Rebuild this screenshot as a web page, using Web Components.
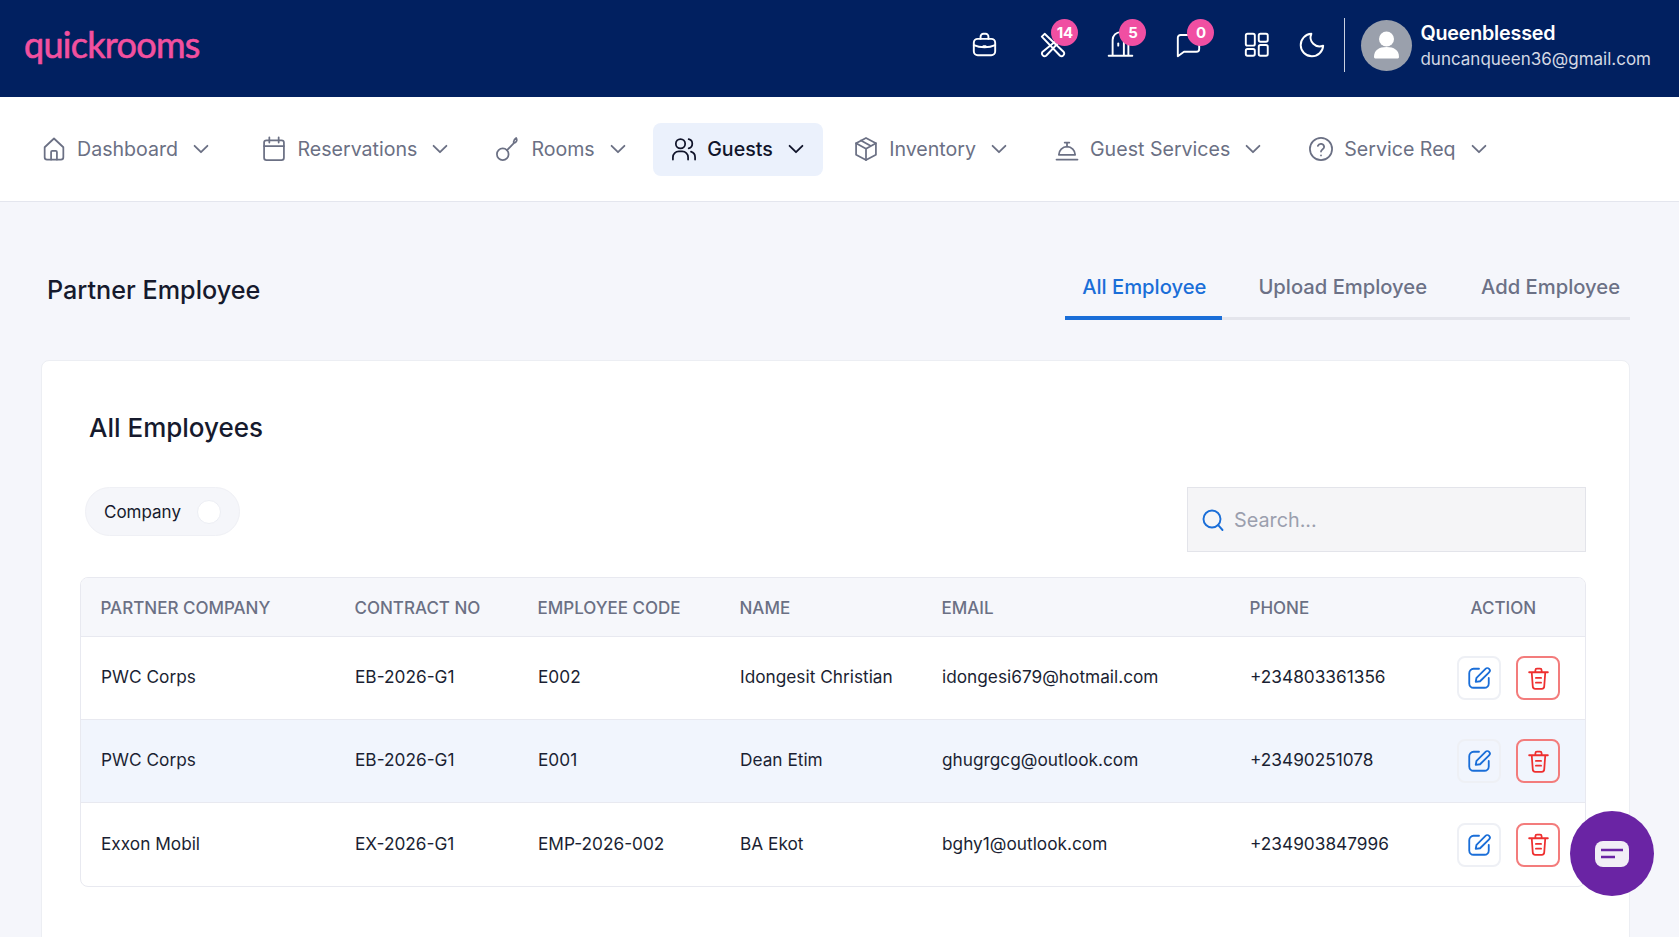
<!DOCTYPE html>
<html lang="en">
<head>
<meta charset="utf-8">
<title>Partner Employee</title>
<style>
  html, body { margin: 0; height: 100%; overflow: hidden; }
  body { background: #f5f6fb; font-family: Inter, "Liberation Sans", sans-serif; color: #161a2d; }
</style>
</head>
<body>
<app-header></app-header>
<main-nav></main-nav>
<employee-page></employee-page>
<chat-fab></chat-fab>

<script>
// Stroke icons, all on a 24 unit box
const ICONS = {
  home: '<path d="M4 10.5 12 3l8 7.5V19a2 2 0 0 1-2 2H6a2 2 0 0 1-2-2z"/><path d="M9.5 21v-6.5a1 1 0 0 1 1-1h3a1 1 0 0 1 1 1V21"/>',
  calendar: '<rect x="3.5" y="4.5" width="17" height="17" rx="2"/><path d="M3.5 9.5h17M8 2v4.5M16 2v4.5"/>',
  key: '<circle cx="7.5" cy="16.5" r="5"/><path d="M11.2 13 17 7M17 7c-.5-2 .3-3.500 2-4.500 1 1.700.6 3.700-2 4.500z"/>',
  users: '<circle cx="9" cy="7.5" r="4"/><path d="M2.5 21v-2a5 5 0 0 1 5-5h3a5 5 0 0 1 5 5v2M16 3.6a4 4 0 0 1 0 7.8M21.5 21v-2a5 5 0 0 0-3.500-4.700"/>',
  box: '<path d="M12 2.500 20.500 7v10L12 21.500 3.500 17V7z"/><path d="M3.500 7 12 11.800 20.500 7M12 11.800v9.700M7.700 4.700l8.500 4.700"/>',
  bell: '<path d="M5 17a7 7 0 0 1 14 0z"/><path d="M3 21h18M12 10V7M10 6.500h4"/>',
  help: '<circle cx="12" cy="12" r="9.500"/><path d="M9.300 9.300a2.800 2.800 0 0 1 5.400.9c0 1.800-2.700 2.400-2.700 4"/><path d="M12 17.500h.01"/>',
  chevron: '<path d="m5 8.500 7 7 7-7"/>',
  briefcase: '<rect x="2.500" y="7" width="19" height="14.500" rx="3.500"/><path d="M8.500 7V5a2.500 2.500 0 0 1 2.500-2.500h2A2.500 2.500 0 0 1 15.500 5v2M2.500 12.500c5.500 2.500 13.500 2.500 19 0M11 13.500h2"/>',
  tools: '<path d="M2.500 5 5 2.500l17 16.200a2.400 2.400 0 0 1-3.300 3.300z"/><path d="M21 4 3 18.700a2.400 2.400 0 0 0 3.300 3.300L20.500 7"/>',
  door: '<path d="M1.500 22h21M5 22V8a7 7 0 0 1 14 0v14M15 9v13"/><path d="M10 11v2"/>',
  chat: '<path d="M2.500 6a2.500 2.500 0 0 1 2.500-2.500h14A2.500 2.500 0 0 1 21.500 6v10a2.500 2.500 0 0 1-2.500 2.500H8L2.500 22.500z"/>',
  grid: '<rect x="2.500" y="2.500" width="8" height="10.500" rx="1.500"/><rect x="14" y="2.500" width="8" height="7" rx="1.500"/><rect x="2.500" y="16" width="8" height="6" rx="1.500"/><rect x="14" y="12.500" width="8" height="9.500" rx="1.500"/>',
  moon: '<path d="M11 2.500a8 8 0 0 0 10.500 10.500A10 10 0 1 1 11 2.500z"/>',
  search: '<circle cx="11" cy="11" r="8.500"/><path d="m17.200 17.200 4.300 4.800"/>',
  edit: '<path d="M12 3.500H7A4 4 0 0 0 3 7.500V17a4 4 0 0 0 4 4h10a4 4 0 0 0 4-4v-5"/><path d="M9 15.500l.7-3.700L18 3.500a2.300 2.300 0 0 1 3.300 3.300L13 15z"/>',
  trash: '<path d="M3 6h18M9 6V4a1.500 1.500 0 0 1 1.500-1.500h3A1.500 1.500 0 0 1 15 4v2M5.500 6l1 13.500A2.500 2.500 0 0 0 9 22h6a2.500 2.500 0 0 0 2.500-2.500l1-13.500M9.500 11.500h5M9.500 16h5"/>'
};

class AppIcon extends HTMLElement {
  connectedCallback() {
    const size = this.getAttribute("size") || 24;
    const stroke = this.getAttribute("stroke") || 1.7;
    this.attachShadow({ mode: "open" }).innerHTML = `
      <style>:host { display: inline-flex; flex: none; line-height: 0; }</style>
      <svg width="${size}" height="${size}" viewBox="0 0 24 24" fill="none" stroke="currentColor"
        stroke-width="${stroke}" stroke-linecap="round" stroke-linejoin="round">${ICONS[this.getAttribute("name")]}</svg>`;
  }
}

// Header icon with optional pink counter
class HeaderIcon extends HTMLElement {
  connectedCallback() {
    const count = this.getAttribute("count");
    this.attachShadow({ mode: "open" }).innerHTML = `
      <style>
        :host { display: block; position: relative; width: 27px; height: 27px; color: #fff; }
        .badge {
          position: absolute; top: -12px; left: 12px; width: 27px; height: 27px; border-radius: 50%;
          background: #f04fa2; color: #fff; font-size: 15px; font-weight: 700;
          display: flex; align-items: center; justify-content: center;
        }
      </style>
      <app-icon name="${this.getAttribute("name")}" size="27" stroke="1.7"></app-icon>
      ${count !== null ? `<span class="badge">${count}</span>` : ""}`;
  }
}

class AppHeader extends HTMLElement {
  connectedCallback() {
    this.attachShadow({ mode: "open" }).innerHTML = `
      <style>
        :host { display: flex; align-items: center; height: 97px; padding: 0 28px 0 24px; box-sizing: border-box; background: #012060; color: #fff; }
        .logo { font-family: Lato, sans-serif; font-size: 36px; font-weight: 400; letter-spacing: -0.7px; color: #f2509f; -webkit-text-stroke: 0.6px #f2509f; margin-top: -9px; }
        .icons { margin-left: auto; display: flex; align-items: center; gap: 41px; margin-top: -8px; }
        .icons header-icon:last-child { margin-left: -12px; }
        .divider { width: 1px; height: 54px; background: #c9d0e0; margin: -7px 16px 0 18px; }
        .avatar { width: 51px; height: 51px; border-radius: 50%; background: #9aa0ac; overflow: hidden; margin-top: -7px; }
        .user { margin-left: 8px; margin-top: -7px; }
        .name { font-size: 19.7px; font-weight: 600; line-height: 27px; letter-spacing: -0.2px; padding-top: 2px; }
        .email { font-size: 17px; line-height: 25px; color: #d3d8e4; }
      </style>
      <div class="logo">quickrooms</div>
      <div class="icons">
        <header-icon name="briefcase"></header-icon>
        <header-icon name="tools" count="14"></header-icon>
        <header-icon name="door" count="5"></header-icon>
        <header-icon name="chat" count="0"></header-icon>
        <header-icon name="grid"></header-icon>
        <header-icon name="moon"></header-icon>
      </div>
      <div class="divider"></div>
      <div class="avatar">
        <svg width="51" height="51" viewBox="0 0 51 51" fill="#fff"><circle cx="25.500" cy="19" r="7.500"/><path d="M13 37c0-7 5-10 12.500-10S38 30 38 37c0 1-1 1.500-2 1.500H15c-1 0-2-.5-2-1.500z"/></svg>
      </div>
      <div class="user">
        <div class="name">Queenblessed</div>
        <div class="email">duncanqueen36@gmail.com</div>
      </div>`;
  }
}

class NavItem extends HTMLElement {
  connectedCallback() {
    this.attachShadow({ mode: "open" }).innerHTML = `
      <style>
        :host { display: flex; align-items: center; height: 53px; padding: 0 16px 0 17px; border-radius: 8px; color: #6b7084; font-size: 19.6px; }
        :host([active]) { background: #ebf1fc; color: #10142a; font-weight: 500; }
        span { margin: 0 12px 0 9px; }
      </style>
      <app-icon name="${this.getAttribute("icon")}" size="28" stroke="1.5"></app-icon>
      <span><slot></slot></span>
      <app-icon name="chevron" size="22" stroke="2"></app-icon>`;
  }
}

class MainNav extends HTMLElement {
  connectedCallback() {
    this.attachShadow({ mode: "open" }).innerHTML = `
      <style>
        :host { display: flex; align-items: center; gap: 11px; height: 105px; padding: 0 23px; box-sizing: border-box; background: #fff; border-bottom: 1px solid #e4e6ee; }
        nav-item:nth-of-type(1) { margin-right: 4.4px; }
        nav-item:nth-of-type(2) { margin-right: -1px; }
        nav-item:nth-of-type(3) { margin-right: -2.5px; }
        nav-item:nth-of-type(4) { margin-right: 1.4px; }
        nav-item:nth-of-type(5) { margin-right: -1px; }
        nav-item:nth-of-type(6) { margin-right: -1px; }
      </style>
      <nav-item icon="home">Dashboard</nav-item>
      <nav-item icon="calendar">Reservations</nav-item>
      <nav-item icon="key">Rooms</nav-item>
      <nav-item icon="users" active>Guests</nav-item>
      <nav-item icon="box">Inventory</nav-item>
      <nav-item icon="bell">Guest Services</nav-item>
      <nav-item icon="help">Service Req</nav-item>`;
  }
}

class TabBar extends HTMLElement {
  connectedCallback() {
    this.attachShadow({ mode: "open" }).innerHTML = `
      <style>
        :host { display: flex; gap: 18px; border-bottom: 3px solid #e4e5ec; font-size: 20.2px; color: #6c7186; font-weight: 500; }
        div { padding: 0 18px 16px; line-height: 26px; margin-bottom: -3px; border-bottom: 4px solid transparent; }
        .on { color: #1a6ed8; border-color: #1a6ed8; padding: 0 16px 16px 17px; }
        div:last-child { padding-right: 10px; }
      </style>
      <div class="on">All Employee</div>
      <div>Upload Employee</div>
      <div>Add Employee</div>`;
  }
}

class EmployeeRow extends HTMLElement {
  connectedCallback() {
    const cells = JSON.parse(this.getAttribute("cells"));
    this.attachShadow({ mode: "open" }).innerHTML = `
      <style>
        :host {
          display: grid; grid-template-columns: var(--cols); align-items: center; height: 83px;
          border-top: 1px solid #e8e9f0; box-sizing: border-box; font-size: 17.25px; color: #1b1f33;
        }
        :host([shaded]) { background: #f1f5fd; }
        :host(:last-child) { height: 84px; }
        div { padding: 0 0 3px 20px; white-space: nowrap; }
        .action { display: flex; gap: 15px; padding-bottom: 0; }
        button {
          width: 44px; height: 44px; padding: 0; background: #fff; border: 2px solid #eef0f5; border-radius: 8px;
          display: flex; align-items: center; justify-content: center; color: #1a6ed8;
        }
        :host([shaded]) button { background: transparent; }
        .del { border-color: #f37c7c; color: #ee2f2f; }
      </style>
      ${cells.map((c) => `<div>${c}</div>`).join("")}
      <div class="action">
        <button><app-icon name="edit" size="26"></app-icon></button>
        <button class="del"><app-icon name="trash" size="25"></app-icon></button>
      </div>`;
  }
}

class EmployeeTable extends HTMLElement {
  connectedCallback() {
    const heads = ["Partner Company", "Contract No", "Employee Code", "Name", "Email", "Phone"];
    this.attachShadow({ mode: "open" }).innerHTML = `
      <style>
        :host {
          --cols: 254px 183px 202px 202px 308px 207px 1fr;
          display: block; margin-left: -5px; border: 1px solid #e8e9f0; border-radius: 8px; background: #fff; overflow: hidden;
        }
        .head {
          display: grid; grid-template-columns: var(--cols); align-items: center; height: 58px;
          background: #f6f7fb; font-size: 17px; font-weight: 500; color: #6b7084; text-transform: uppercase;
        }
        .head div { padding: 1px 0 0 19.5px; white-space: nowrap; }
        .head .act { padding-left: 33.5px; }
      </style>
      <div class="head">
        ${heads.map((h) => `<div>${h}</div>`).join("")}
        <div class="act">Action</div>
      </div>
      <slot></slot>`;
  }
}

class SearchBox extends HTMLElement {
  connectedCallback() {
    this.attachShadow({ mode: "open" }).innerHTML = `
      <style>
        :host {
          display: flex; align-items: center; gap: 9px; width: 399px; height: 65px; padding-left: 13px; box-sizing: border-box;
          background: #f5f5f7; border: 1px solid #e3e4ea; color: #1a6ed8;
        }
        span { font-size: 19.8px; color: #9b9fae; }
      </style>
      <app-icon name="search" size="24" stroke="1.9"></app-icon>
      <span>Search...</span>`;
  }
}

class CompanyFilter extends HTMLElement {
  connectedCallback() {
    this.attachShadow({ mode: "open" }).innerHTML = `
      <style>
        :host {
          display: flex; align-items: center; justify-content: space-between; width: 155px; height: 49px; padding: 0 18px;
          box-sizing: border-box; border: 1px solid #eff0f5; border-radius: 25px; background: #f5f6fa; font-size: 17px; color: #161a2d;
        }
        i { width: 24px; height: 24px; border-radius: 50%; background: #fff; border: 1px solid #eceef4; box-sizing: border-box; }
      </style>
      Company<i></i>`;
  }
}

class EmployeePage extends HTMLElement {
  connectedCallback() {
    this.attachShadow({ mode: "open" }).innerHTML = `
      <style>
        :host { display: block; padding: 72px 49px 0 41px; }
        .top { display: flex; justify-content: space-between; align-items: flex-start; }
        h1 { margin: 0 0 0 6px; font-size: 25.2px; line-height: 32px; font-weight: 500; color: #161a2d; }
        .card { margin-top: 40px; padding: 50px 43px 60px; background: #fff; border: 1px solid #eceef3; border-radius: 8px; }
        h2 { margin: 0 0 42px 4px; font-size: 26px; line-height: 34px; font-weight: 500; color: #161a2d; }
        .filters { display: flex; justify-content: space-between; align-items: flex-start; margin-bottom: 25px; }
      </style>
      <div class="top">
        <h1>Partner Employee</h1>
        <tab-bar></tab-bar>
      </div>
      <div class="card">
        <h2>All Employees</h2>
        <div class="filters">
          <company-filter></company-filter>
          <search-box></search-box>
        </div>
        <employee-table>
          <employee-row cells='["PWC Corps","EB-2026-G1","E002","Idongesit Christian","idongesi679@hotmail.com","+234803361356"]'></employee-row>
          <employee-row shaded cells='["PWC Corps","EB-2026-G1","E001","Dean Etim","ghugrgcg@outlook.com","+23490251078"]'></employee-row>
          <employee-row cells='["Exxon Mobil","EX-2026-G1","EMP-2026-002","BA Ekot","bghy1@outlook.com","+234903847996"]'></employee-row>
        </employee-table>
      </div>`;
  }
}

class ChatFab extends HTMLElement {
  connectedCallback() {
    this.attachShadow({ mode: "open" }).innerHTML = `
      <style>
        :host {
          position: fixed; left: 1570px; top: 811px; width: 84px; height: 85px; border-radius: 50%; background: #6a24a4;
          display: flex; align-items: center; justify-content: center;
        }
      </style>
      <svg width="34" height="26" viewBox="0 0 34 26"><rect width="34" height="26" rx="8" fill="#f1eef6"/><path d="M6 9h22M6 16h14" stroke="#6a24a4" stroke-width="2.500"/></svg>`;
  }
}

customElements.define("app-icon", AppIcon);
customElements.define("header-icon", HeaderIcon);
customElements.define("app-header", AppHeader);
customElements.define("nav-item", NavItem);
customElements.define("main-nav", MainNav);
customElements.define("tab-bar", TabBar);
customElements.define("employee-row", EmployeeRow);
customElements.define("employee-table", EmployeeTable);
customElements.define("search-box", SearchBox);
customElements.define("company-filter", CompanyFilter);
customElements.define("employee-page", EmployeePage);
customElements.define("chat-fab", ChatFab);
</script>
</body>
</html>
